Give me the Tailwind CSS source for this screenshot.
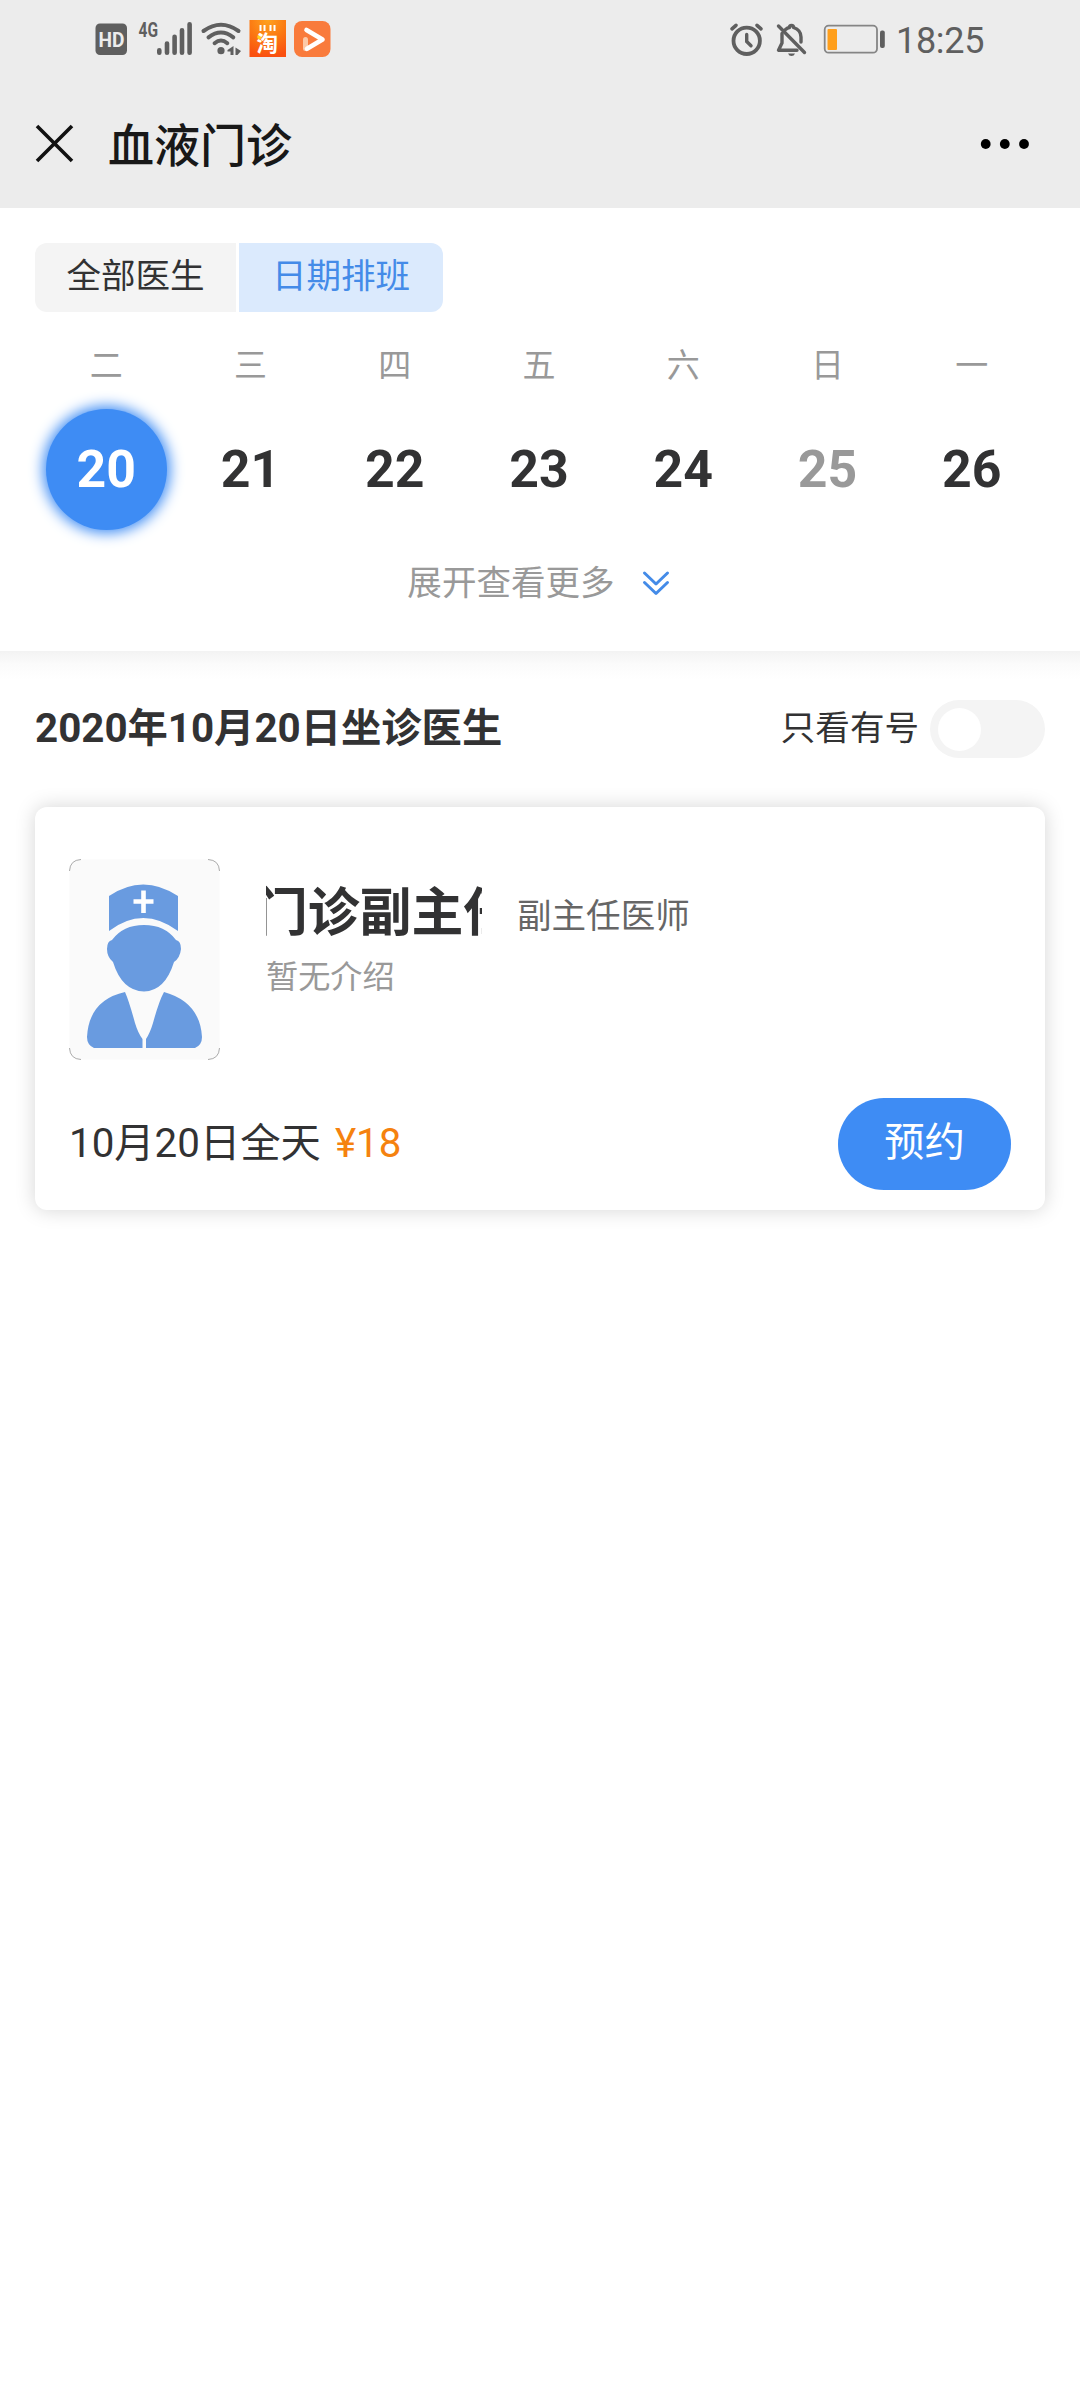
<!DOCTYPE html>
<html lang="zh-CN">
<head>
  <meta charset="UTF-8">
  <meta name="viewport" content="width=device-width, initial-scale=1">
  <title>血液门诊</title>
  <script src="https://cdn.jsdelivr.net/npm/@tailwindcss/browser@4"></script>
</head>
<body class="w-[1080px] min-h-[2400px] bg-white text-[#323233] font-[Roboto,'Noto_Sans_CJK_SC',sans-serif]">

<header class="bg-[#ececec] h-[208px]">
  <!-- Status bar -->
  <div class="flex justify-between h-20 px-[95px] text-[#5f5f5f]">
    <div class="flex">
      <svg class="w-[32px] h-20" viewBox="95 0 32 80">
        <rect x="95.5" y="23.5" width="31.5" height="31.5" rx="4.5" fill="#5f5f5f"/>
        <text x="98.5" y="46.8" font-size="21" font-weight="700" fill="#ececec" textLength="26" lengthAdjust="spacingAndGlyphs">HD</text>
      </svg>
      <svg class="w-[68px] h-20" viewBox="127 0 68 80">
        <text x="138.5" y="36.7" font-size="20" font-weight="700" fill="#5f5f5f" textLength="19.5" lengthAdjust="spacingAndGlyphs">4G</text>
        <path d="M159.3 50.3V52.7M167 43.6V52.7M174.6 36.8V52.7M182 30.2V52.7M189.6 24.3V52.7" fill="none" stroke="#5f5f5f" stroke-width="4.6" stroke-linecap="round"/>
      </svg>
      <svg class="w-[54px] h-20" viewBox="195 0 54 80">
        <g fill="none" stroke="#5f5f5f" stroke-width="4" stroke-linecap="round">
          <path d="M203.5 31Q221 18.5 238.5 31"/>
          <path d="M208.5 37.3Q221 27.8 233.3 37.3"/>
          <path d="M214.6 43.2Q221 37.8 227.3 43.2"/>
        </g>
        <circle cx="221" cy="50.7" r="3.6" fill="#5f5f5f"/>
        <path d="M233.5 46V55H230.5V51.5H227.5V50ZM235.5 47.5L241 51L237.5 55H235.5Z" fill="#5f5f5f"/>
      </svg>
      <svg class="w-[37px] h-20" viewBox="249 0 37 80">
        <defs>
          <radialGradient id="tb" cx="50%" cy="0%" r="100%">
            <stop offset="0" stop-color="#ffa21f"/>
            <stop offset="0.5" stop-color="#fb7a13"/>
            <stop offset="1" stop-color="#fa5010"/>
          </radialGradient>
        </defs>
        <rect x="249.5" y="20" width="36.5" height="37" fill="url(#tb)"/>
        <path d="M260.5 25V31M264.5 25V31M270.500 25V31M274.500 25V31" stroke="#fff" stroke-width="2"/>
        <circle cx="259.5" cy="37" r="2.3" fill="#ffd21f"/>
        <text x="256.5" y="51.3" font-size="21.5" font-weight="700" fill="#fff">淘</text>
      </svg>
      <svg class="w-[45px] h-20" viewBox="286 0 45 80">
        <rect x="294" y="21" width="36.5" height="36" rx="8" fill="#f97b3c"/>
        <path d="M305.5 39.5V48.500" stroke="#fcc9a8" stroke-width="5" stroke-linecap="round"/>
        <path d="M306.5 30L322.5 39.5L307 48.8" fill="none" stroke="#fff" stroke-width="4.6" stroke-linecap="round" stroke-linejoin="round"/>
      </svg>
    </div>
    <div class="flex">
      <svg class="w-[36px] h-20" viewBox="729 0 36 80">
        <g fill="none" stroke="#5f5f5f" stroke-linecap="round">
          <circle cx="746.7" cy="40.8" r="13.2" stroke-width="3.8"/>
          <path d="M746.7 34.5V41.5L751 45.8" stroke-width="3.4"/>
          <path d="M732 28.8L736 25.3M761 28.8L757 25.3" stroke-width="3.6"/>
        </g>
      </svg>
      <svg class="w-[58px] h-20" viewBox="765 0 58 80">
        <g fill="none" stroke="#5f5f5f" stroke-width="3.4" stroke-linecap="round" stroke-linejoin="round">
          <path d="M778.5 26L804.5 52.5"/>
          <path d="M782 33.5V43L778.5 50.3H797"/>
          <path d="M785.5 29.5Q787.5 27.7 789.5 27.5A2 2 0 1 1 793.5 27.5Q801 30 801 37V42"/>
        </g>
        <path d="M788 53.5H795Q794 56 791.5 56Q789 56 788 53.5Z" fill="#5f5f5f"/>
      </svg>
      <svg class="w-[74px] h-20" viewBox="823 0 74 80">
        <rect x="824.7" y="25.7" width="52.3" height="27" rx="4" fill="none" stroke="#858585" stroke-width="1.8"/>
        <rect x="827.5" y="29" width="9.5" height="21" rx="1" fill="#ff9f1c"/>
        <rect x="880" y="30.5" width="4.8" height="17.5" rx="2" fill="#5f5f5f"/>
      </svg>
      <span class="w-[88px] -ml-[1px] mr-[1px] text-[36px] leading-[82px] tracking-[-0.3px]">18:25</span>
    </div>
  </div>

  <!-- Title bar -->
  <div class="flex items-center h-32 px-[35px]">
    <svg class="w-[39px] h-[39px] -mt-[2px]" viewBox="0 0 39 39">
      <path d="M2 2L37 37M37 2L2 37" stroke="#111" stroke-width="3.6"/>
    </svg>
    <h1 class="ml-[34px] mt-[3px] flex-1 text-[46px] leading-[60px] font-medium text-[#181818]">血液门诊</h1>
    <svg class="w-[50px] h-[10px] mr-[15px] -mt-[1px]" viewBox="0 0 50 10">
      <circle cx="5.7" cy="5" r="4.9"/>
      <circle cx="24.8" cy="5" r="4.9"/>
      <circle cx="44" cy="5" r="4.9"/>
    </svg>
  </div>
</header>

<!-- Calendar -->
<section class="h-[443px] pt-[35px] px-[35px]">
  <div class="flex gap-[3px] text-[34.56px] leading-[64px] text-center">
    <button class="w-[201px] h-[69px] pb-[3px] rounded-l-[12px] bg-[#f4f4f4]">全部医生</button>
    <button class="w-[204px] h-[69px] pb-[3px] rounded-r-[12px] bg-[#dbeafd] text-[#448be8]">日期排班</button>
  </div>

  <div class="grid grid-cols-7 mt-[30px] -ml-[1px] mr-[1px] text-center text-[33px] leading-[48px] text-[#999]">
    <span>二</span><span>三</span><span>四</span><span>五</span><span>六</span><span>日</span><span>一</span>
  </div>

  <div class="grid grid-cols-7 mt-[19px] -ml-[1px] mr-[1px] place-items-center text-[51.84px] leading-[121px] font-bold">
    <span class="w-[121px] h-[121px] rounded-full bg-[#3e8cf4] text-white text-center shadow-[0_0_14px_3px_#3e8cf4]">20</span>
    <span>21</span>
    <span>22</span>
    <span>23</span>
    <span>24</span>
    <span class="text-[#999]">25</span>
    <span>26</span>
  </div>

  <div class="flex items-center justify-center mt-[28px] -ml-[3px] text-[34.56px] leading-[50px] text-[#999]">
    <span>展开查看更多</span>
    <svg class="w-[28px] h-[26px] ml-[27px]" viewBox="0 0 28 26">
      <path d="M2.5 3L14 14L25.5 3M2.5 12.5L14 23.5L25.5 12.5" fill="none" stroke="#448be8" stroke-width="3" stroke-linecap="round" stroke-linejoin="round"/>
    </svg>
  </div>
</section>
<div class="h-[29px] bg-linear-to-b from-[#f3f3f3] via-[#fbfbfb] via-45% to-white"></div>

<!-- Doctors on duty -->
<section class="px-[35px] pt-[20px]">
  <div class="flex items-center justify-between h-[58px]">
    <h2 class="text-[40.32px] leading-[58px] font-bold -mt-[1px]">2020年10月20日坐诊医生</h2>
    <div class="flex items-center">
      <span class="text-[34.56px] leading-[50px] -mt-[3px]">只看有号</span>
      <span class="flex items-center w-[115px] h-[58px] ml-[11px] pl-[8px] rounded-full bg-[#f4f4f4]">
        <span class="w-[43px] h-[43px] rounded-full bg-white"></span>
      </span>
    </div>
  </div>

  <div class="flex flex-col h-[403px] mt-[49px] pt-[52px] px-[34px] rounded-[12px] bg-white shadow-[0_0_20px_rgba(0,0,0,0.17)]">
    <div class="flex">
      <svg class="w-[151px] h-[201px]" viewBox="0 0 151 201">
        <rect x="0.5" y="0.5" width="150" height="200" rx="13" fill="#fafafa"/>
        <path d="M0.5 12Q1 1 12 0.5M139 0.5Q150 1 150.5 12M150.5 189Q150 200 139 200.5M12 200.5Q1 200 0.5 189" fill="none" stroke="#aaa"/>
        <g fill="#699be0">
          <path d="M40 37Q74 14 109 37V72Q74 46 40 72Z"/>
          <path d="M43 81Q54 66 75 66Q96 66 107 81Q112 82 112 90Q111 99 105 103Q96 132 75 132.5Q53 132 44 103Q38 98 38 90Q38 82 43 81Z"/>
          <path d="M56 133Q20 141 18 178Q18 186 25 189H73.5V180Q69 174 66 164Q60 142 56 133Z"/>
          <path d="M95 133Q131 143 133 178Q133 186 126 189H77V180Q81 174 84 164Q90 142 95 133Z"/>
        </g>
        <path d="M74.5 31.5V54M64.5 42.5H84.5" stroke="#fff" stroke-width="4.6"/>
      </svg>
      <div class="ml-[46px] pt-[25px]">
        <!-- long names are cropped to the name column -->
        <div class="flex items-center">
          <div class="w-[216px] h-[52px] overflow-hidden">
            <p class="-ml-[10px] text-[51.84px] leading-[57px] font-bold whitespace-nowrap">门诊副主任</p>
          </div>
          <span class="ml-[35px] mt-[10px] text-[34.56px] leading-[44px] text-[#666]">副主任医师</span>
        </div>
        <p class="mt-[16px] text-[32.2px] leading-[46px] text-[#999]">暂无介绍</p>
      </div>
    </div>
    <div class="flex items-center mt-[38px] text-[40.32px] leading-[58px]">
      <span class="-mt-[1px]">10月20日全天</span>
      <span class="ml-[14px] -mt-[1px] flex-1 text-[#f5820f]">¥18</span>
      <button class="w-[173px] h-[92px] pb-[3px] rounded-full bg-[#3e8cf4] text-white">预约</button>
    </div>
  </div>
</section>

</body>
</html>
